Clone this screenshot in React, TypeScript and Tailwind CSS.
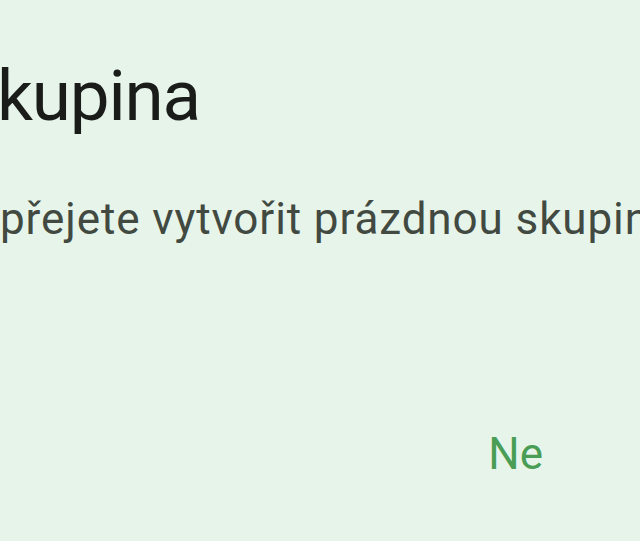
import React from 'react';

const App: React.FC = () => {
  return (
    <div
      className="h-[541px] w-[640px] overflow-hidden bg-[#e6f4ea] text-[#1a1c19]"
      style={{ fontFamily: 'Roboto, "Noto Sans", sans-serif' }}
    >
      <div className="pt-[52px]">
        <h1 className="flex whitespace-nowrap text-[71px] leading-[88px] font-normal tracking-[-1.2px] ml-[-3px]">
          <span className="flex w-0 justify-end">Prázdná s</span>
          <span>kupina</span>
        </h1>
      </div>

      <p className="mt-[53px] flex whitespace-nowrap text-[44px] leading-[52px] tracking-[0.9px] text-[#414941]">
        <span className="flex w-0 justify-end">Opravdu si&nbsp;</span>
        <span>přejete vytvořit prázdnou skupinu?</span>
      </p>

      <div className="mt-[183px] flex justify-end pr-[97px]">
        <button className="text-[44px] leading-[52px] text-[#4a9d55]">Ne</button>
      </div>
    </div>
  );
};

export default App;
